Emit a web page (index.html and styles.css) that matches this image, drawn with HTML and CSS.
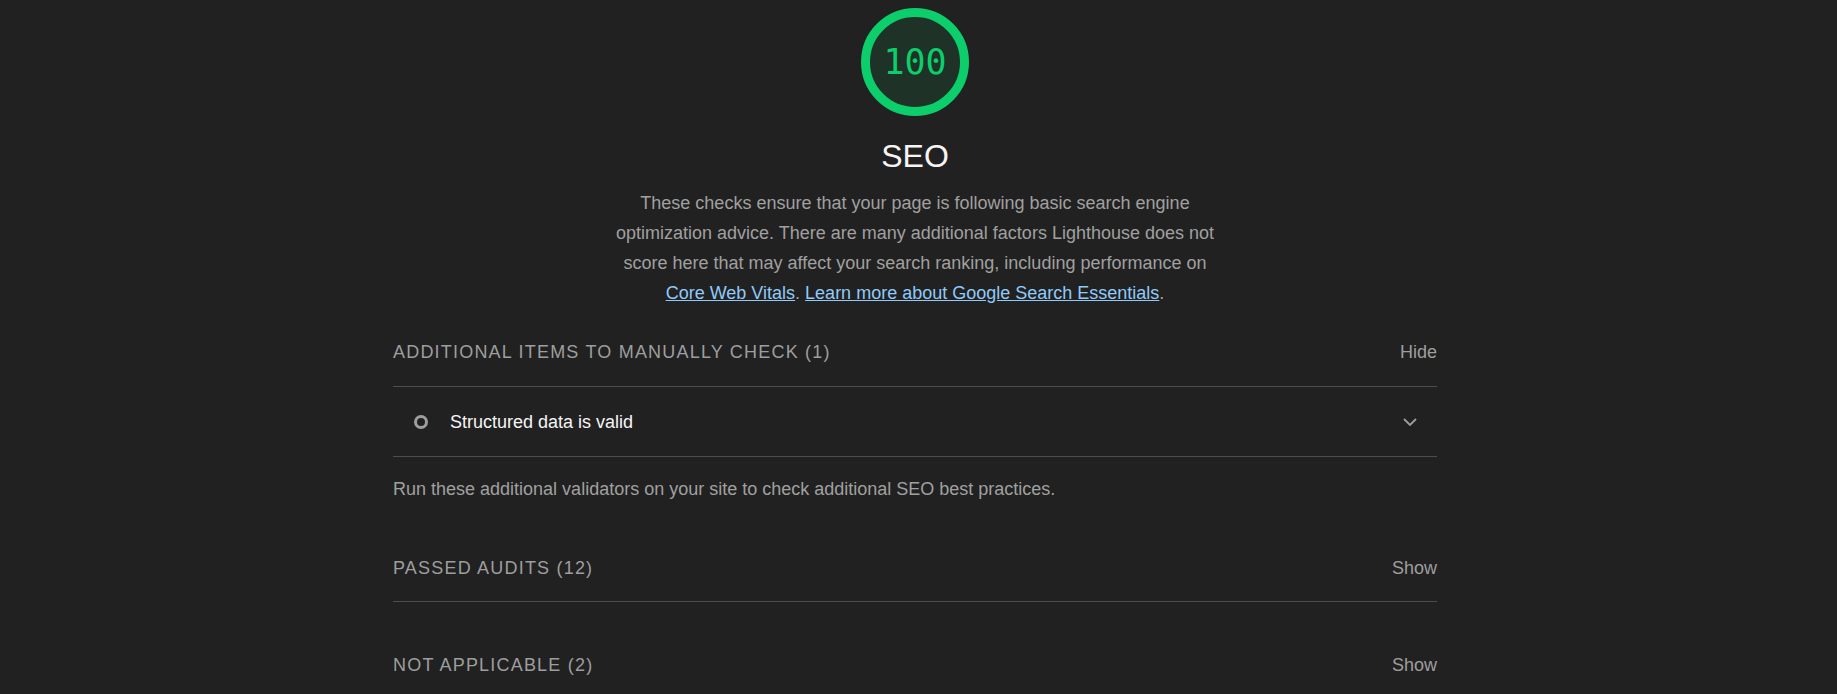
FILE: index.html
```html
<!DOCTYPE html>
<html lang="en">
<head>
<meta charset="utf-8">
<title>SEO</title>
<link rel="stylesheet" href="styles.css">
</head>
<body>
<div class="report">
  <header class="cat-header">
    <div class="gauge">
      <svg class="gauge-svg" width="108" height="108" viewBox="0 0 108 108">
        <circle cx="54" cy="54" r="49.5" fill="rgba(12,206,107,0.1)" stroke="#0cce6b" stroke-width="9"/>
      </svg>
      <div class="gauge-value">100</div>
    </div>
    <div class="cat-title">SEO</div>
    <p class="cat-desc">These checks ensure that your page is following basic search engine optimization advice. There are many additional factors Lighthouse does not score here that may affect your search ranking, including performance on <a href="#">Core Web Vitals</a>. <a href="#">Learn more about Google Search Essentials</a>.</p>
  </header>

  <section class="group">
    <div class="group-header">
      <span class="group-title">Additional items to manually check (1)</span>
      <span class="group-toggle">Hide</span>
    </div>
    <div class="audit">
      <span class="audit-icon"></span>
      <span class="audit-title">Structured data is valid</span>
      <svg class="chevron" width="14" height="8" viewBox="0 0 14 8">
        <polyline points="1,1 7,7 13,1" fill="none" stroke="#9e9e9e" stroke-width="1.8"/>
      </svg>
    </div>
    <p class="group-desc">Run these additional validators on your site to check additional SEO best practices.</p>
  </section>

  <section class="group group--collapsed">
    <div class="group-header">
      <span class="group-title">Passed audits (12)</span>
      <span class="group-toggle">Show</span>
    </div>
  </section>

  <section class="group group--collapsed group--last">
    <div class="group-header">
      <span class="group-title">Not applicable (2)</span>
      <span class="group-toggle">Show</span>
    </div>
  </section>
</div>
</body>
</html>
```

FILE: styles.css
```css
html, body {
  margin: 0;
  background: #212121;
}

body {
  padding-right: 7px;
  font-family: "Liberation Sans", Arial, sans-serif;
  font-size: 18px;
  line-height: 30px;
  color: #a0a0a0;
}

.report {
  width: 1044px;
  margin: 0 auto;
}

.cat-header {
  display: flex;
  flex-direction: column;
  align-items: center;
  padding-top: 8px;
}

.gauge {
  display: grid;
  width: 108px;
  height: 108px;
}

.gauge-svg,
.gauge-value {
  grid-area: 1 / 1;
}

.gauge-svg {
  display: block;
}

.gauge-value {
  display: flex;
  align-items: center;
  justify-content: center;
  font-family: "DejaVu Sans Mono", "Liberation Mono", monospace;
  font-size: 35px;
  color: #0cce6b;
}

.cat-title {
  margin-top: 22px;
  font-size: 32px;
  line-height: 36px;
  color: #f5f5f5;
}

.cat-desc {
  width: 610px;
  margin: 14px 0 0;
  text-align: center;
  color: #a0a0a0;
}

.cat-desc a {
  color: #90caf9;
  text-decoration: underline;
}

.group {
  margin-top: 29px;
}

.group--collapsed {
  margin-top: 49px;
}

.group--last {
  margin-top: 48px;
}

.group-header {
  display: flex;
  justify-content: space-between;
  padding-bottom: 19px;
  border-bottom: 1px solid #4d4d4d;
}

.group--collapsed .group-header {
  padding-bottom: 18px;
}

.group-title {
  text-transform: uppercase;
  letter-spacing: 1.2px;
  color: #9e9e9e;
}

.group-toggle {
  color: #9e9e9e;
}

.audit {
  display: flex;
  align-items: center;
  height: 69px;
  padding: 0 20px 0 21px;
  border-bottom: 1px solid #4d4d4d;
}

.audit-icon {
  width: 8px;
  height: 8px;
  border: 3px solid #9e9e9e;
  border-radius: 50%;
  flex: none;
}

.audit-title {
  flex: 1;
  margin-left: 22px;
  color: #f5f5f5;
}

.chevron {
  display: block;
  flex: none;
}

.group-desc {
  margin: 17px 0 0;
  color: #a0a0a0;
}
```
